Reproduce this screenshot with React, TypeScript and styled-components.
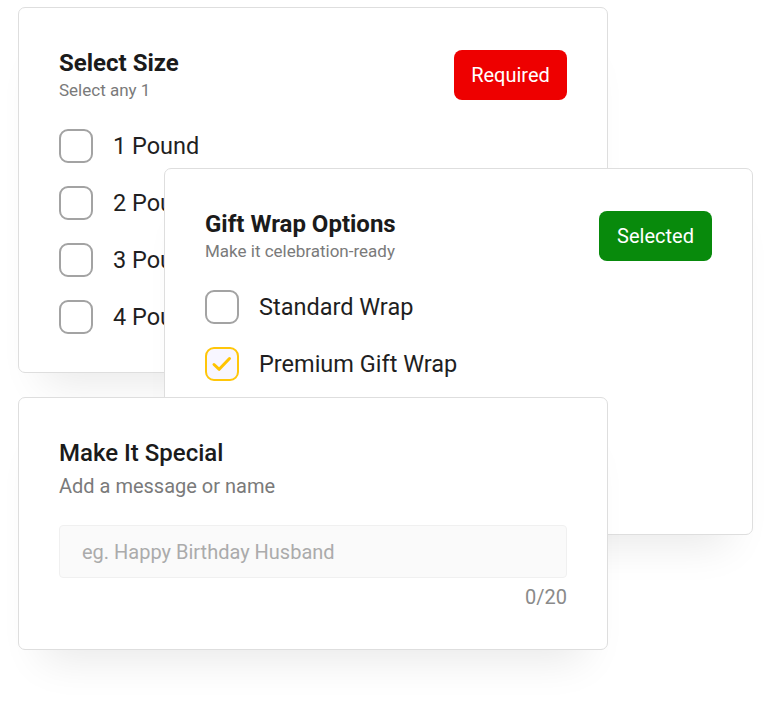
import styled, { createGlobalStyle } from "styled-components";

const GlobalStyle = createGlobalStyle`
  * {
    box-sizing: border-box;
  }

  body {
    margin: 0;
    background: #ffffff;
    font-family: Roboto, "Liberation Sans", sans-serif;
  }
`;

// the three cards are laid over each other like a collage,
// so the grid lines mark where each one starts and ends
const Stage = styled.div`
  width: 772px;
  height: 714px;
  display: grid;
  grid-template-columns: 18px 146px 444px 145px 1fr;
  grid-template-rows: 7px 161px 205px 24px 138px 115px 1fr;
`;

const Card = styled.section<{ $col: string; $row: string }>`
  grid-column: ${(props) => props.$col};
  grid-row: ${(props) => props.$row};
  background: #ffffff;
  border: 1px solid #dedede;
  border-radius: 7px;
  padding: 40px 40px;
  box-shadow: 0 34px 40px -24px rgba(0, 0, 0, 0.09);
  display: flex;
  flex-direction: column;
  min-width: 0;
  overflow: hidden;
`;

const Header = styled.div`
  display: flex;
  justify-content: space-between;
  align-items: center;
`;

const Heading = styled.div`
  display: flex;
  flex-direction: column;
`;

const Title = styled.h2<{ $weight?: number }>`
  margin: 0;
  font-size: 24px;
  line-height: 30px;
  font-weight: ${(props) => props.$weight ?? 700};
  color: #1b1b1b;
`;

const Subtitle = styled.p<{ $size?: number; $gap?: number }>`
  margin: ${(props) => props.$gap ?? 1}px 0 0;
  font-size: ${(props) => props.$size ?? 17}px;
  line-height: ${(props) => (props.$size ?? 17) + 5}px;
  color: #7a7a7a;
`;

const Badge = styled.span<{ $color: string }>`
  display: inline-flex;
  align-items: center;
  justify-content: center;
  height: 50px;
  padding: 0 17px;
  min-width: 113px;
  border-radius: 8px;
  background: ${(props) => props.$color};
  color: #ffffff;
  font-size: 20px;
  white-space: nowrap;
`;

const OptionList = styled.ul`
  list-style: none;
  margin: 28px 0 0;
  padding: 0;
  display: flex;
  flex-direction: column;
  gap: 23px;
`;

const Option = styled.li`
  display: flex;
  align-items: center;
  gap: 20px;
  font-size: 23.5px;
  line-height: 34px;
  color: #1f1f1f;
  white-space: nowrap;
`;

const Box = styled.span<{ $checked?: boolean }>`
  flex-shrink: 0;
  width: 34px;
  height: 34px;
  border-radius: 9px;
  border: 2px solid ${(props) => (props.$checked ? "#ffc60a" : "#a3a3a3")};
  background: ${(props) => (props.$checked ? "#f8f6ff" : "#ffffff")};
  display: flex;
  align-items: center;
  justify-content: center;
`;

const Field = styled.div`
  margin-top: 26px;
  height: 56px;
  border: 1px solid #f0f0f0;
  background: #fafafa;
  border-radius: 4px;
  padding: 0 22px;
  display: flex;
  align-items: center;
  font-size: 20px;
  color: #ababab;
`;

const Counter = styled.div`
  margin-top: 7px;
  text-align: right;
  font-size: 20px;
  color: #8a8a8a;
`;

const Check = () => (
  <svg width="24" height="24" viewBox="0 0 24 24" fill="none">
    <path
      d="M4 12.5l5.2 4.8 10.3-10.8"
      stroke="#ffc400"
      strokeWidth="3"
      strokeLinecap="round"
      strokeLinejoin="round"
    />
  </svg>
);

const sizes = ["1 Pound", "2 Pound", "3 Pound", "4 Pound"];

const wraps = [
  { label: "Standard Wrap", checked: false },
  { label: "Premium Gift Wrap", checked: true },
];

const App = (): JSX.Element => {
  return (
    <>
      <GlobalStyle />
      <Stage>
        <Card $col="2 / 4" $row="2 / 4">
          <Header>
            <Heading>
              <Title>Select Size</Title>
              <Subtitle>Select any 1</Subtitle>
            </Heading>
            <Badge $color="#ee0000">Required</Badge>
          </Header>
          <OptionList>
            {sizes.map((size) => (
              <Option key={size}>
                <Box />
                {size}
              </Option>
            ))}
          </OptionList>
        </Card>

        <Card $col="3 / 5" $row="3 / 6">
          <Header>
            <Heading>
              <Title>Gift Wrap Options</Title>
              <Subtitle>Make it celebration-ready</Subtitle>
            </Heading>
            <Badge $color="#088a0c">Selected</Badge>
          </Header>
          <OptionList>
            {wraps.map((wrap) => (
              <Option key={wrap.label}>
                <Box $checked={wrap.checked}>{wrap.checked && <Check />}</Box>
                {wrap.label}
              </Option>
            ))}
          </OptionList>
        </Card>

        <Card $col="2 / 4" $row="5 / 7">
          <Heading>
            <Title $weight={500}>Make It Special</Title>
            <Subtitle $size={20} $gap={6}>
              Add a message or name
            </Subtitle>
          </Heading>
          <Field>eg. Happy Birthday Husband</Field>
          <Counter>0/20</Counter>
        </Card>
      </Stage>
    </>
  );
};

export default App;
